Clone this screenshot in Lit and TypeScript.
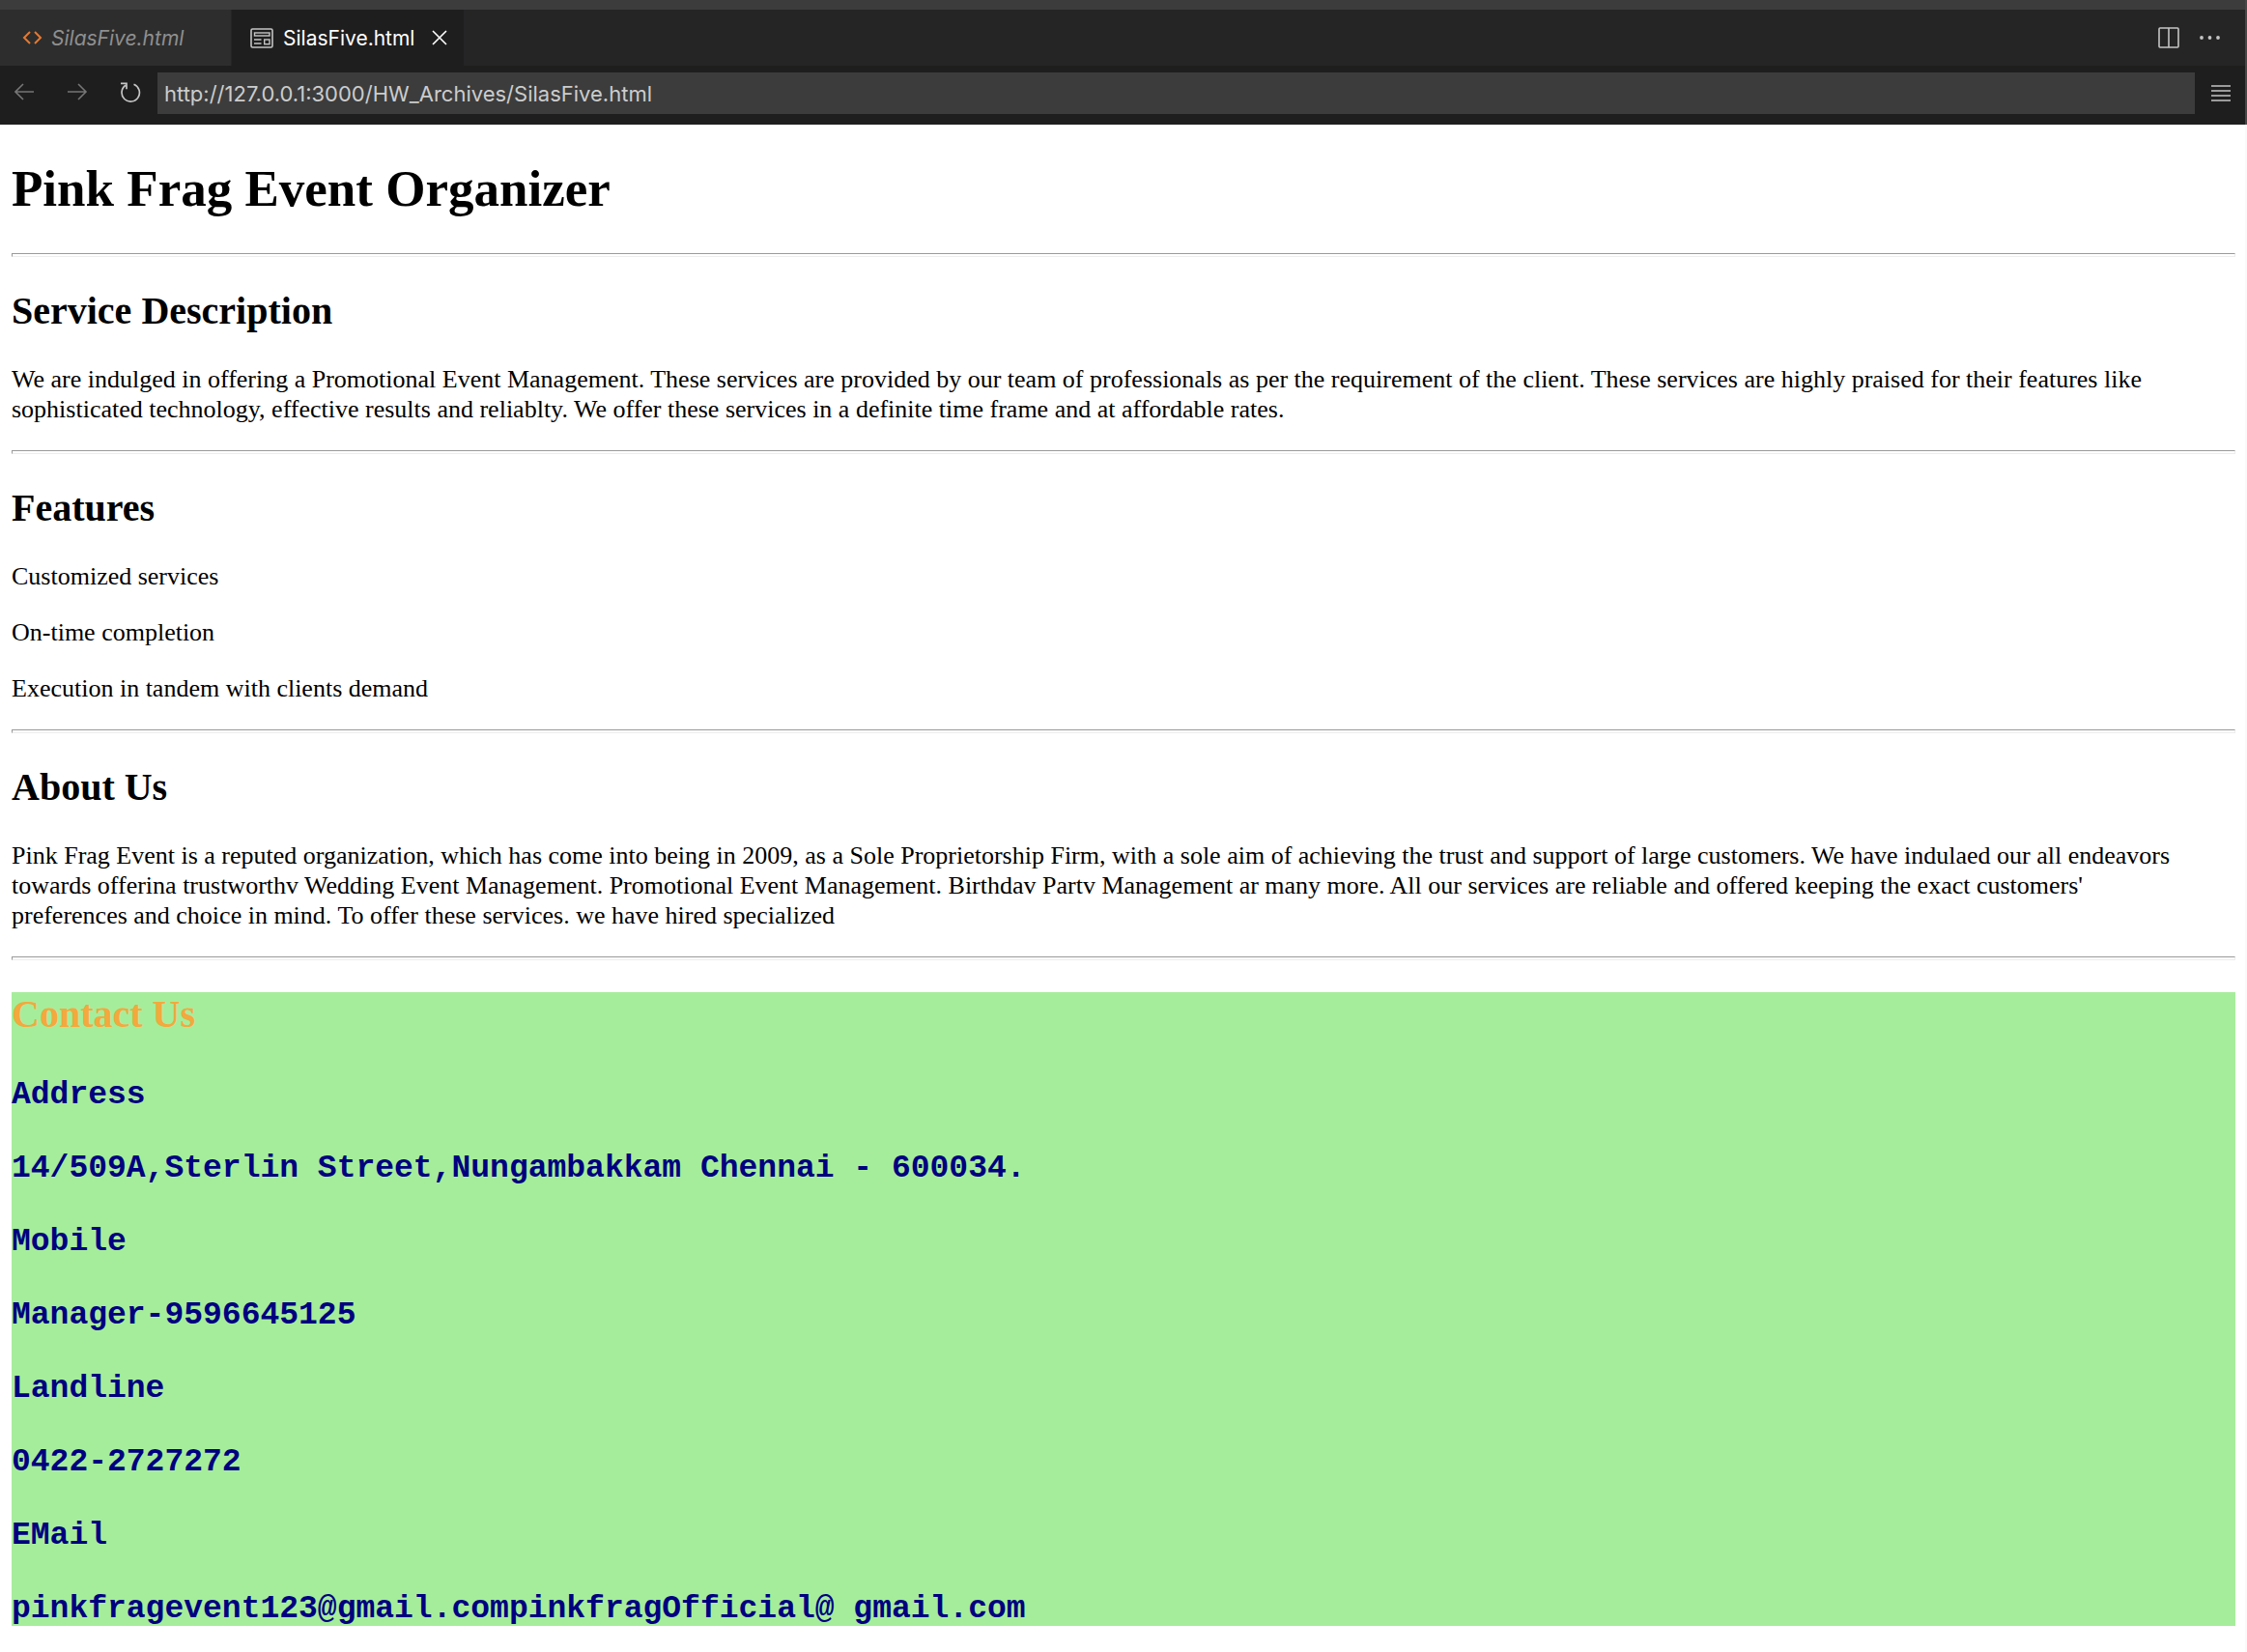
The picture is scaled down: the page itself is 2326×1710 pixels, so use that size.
import { LitElement, html, css, svg } from "lit";
import { customElement, property } from "lit/decorators.js";

const icons = {
  code: svg`<path d="M8 4 2 10l6 6M13 4l6 6-6 6" stroke-width="2" />`,
  preview: svg`<rect x="1" y="1" width="22" height="19" rx="1.5" stroke-width="1.6" /><rect x="4.5" y="5" width="15.5" height="3" stroke-width="1.4" /><path d="M4 12h7.500M4 16h7.500" stroke-width="1.4" /><rect x="14.700" y="12" width="5.300" height="4.700" stroke-width="1.4" />`,
  close: svg`<path d="M1 1l14 14M15 1 1 15" stroke-width="1.6" />`,
  back: svg`<path d="M20 9H1M9 1 1 9l8 8" stroke-width="1.6" />`,
  forward: svg`<path d="M0 9h19M11 1l8 8-8 8" stroke-width="1.6" />`,
  reload: svg`<path d="M13.500 2.300A9.200 9.200 0 1 1 5 3.300M0 1.300h6v6" stroke-width="1.7" />`,
  split: svg`<rect x="1" y="1" width="20" height="20" rx="1" stroke-width="1.6" /><path d="M11 1v20" stroke-width="1.6" />`,
  more: svg`<g fill="currentColor" stroke="none"><circle cx="2" cy="11" r="1.900" /><circle cx="10.500" cy="11" r="1.900" /><circle cx="19" cy="11" r="1.900" /></g>`,
  menu: svg`<path d="M0 1h20M0 6h20M0 11h20M0 16h20" stroke-width="1.6" />`,
};

const icon = (name: keyof typeof icons, width: number, height: number) => html`
  <svg width=${width} height=${height} viewBox="0 0 ${width} ${height}" fill="none" stroke="currentColor" aria-hidden="true">
    ${icons[name]}
  </svg>
`;

@customElement("editor-chrome")
export class EditorChrome extends LitElement {
  @property() url = "";

  static styles = css`
    :host {
      display: block;
      background: #1e1e1e;
      border-right: 2px solid #484848;
      font-family: Inter, "Liberation Sans", sans-serif;
      font-size: 21px;
      color: #c5c5c5;
    }
    svg {
      display: block;
      flex: none;
    }
    button {
      display: flex;
      align-items: center;
      margin: 0;
      padding: 0;
      border: 0;
      background: none;
      color: inherit;
      font: inherit;
      cursor: pointer;
    }
    .tabs {
      display: flex;
      height: 58px;
      border-top: 10px solid #3c3c3c;
      background: #252526;
    }
    .tab {
      display: flex;
      align-items: center;
      box-sizing: border-box;
      width: 240px;
      padding-left: 23px;
      background: #2d2d2d;
      border-right: 1px solid #252526;
      color: #8f8f8f;
      font-style: italic;
    }
    .tab .label {
      gap: 9px;
    }
    .tab.active {
      padding-left: 19px;
      gap: 18px;
      background: #1e1e1e;
      border-right: 0;
      color: #fff;
      font-style: normal;
    }
    .tab.active .label {
      gap: 10px;
    }
    .code {
      color: #e37933;
    }
    .preview {
      color: #c5c5c5;
    }
    .actions {
      display: flex;
      gap: 21px;
      margin-left: auto;
      padding-right: 26px;
    }
    .bar {
      display: flex;
      align-items: center;
      height: 61px;
      box-sizing: border-box;
      padding: 0 15px 4px;
    }
    .nav {
      display: flex;
      align-items: center;
      gap: 34px;
      margin-right: 17px;
      padding-bottom: 3px;
    }
    .nav button:disabled {
      color: #767676;
      cursor: default;
    }
    .address {
      flex: 1;
      min-width: 0;
      height: 43px;
      box-sizing: border-box;
      margin: 0 17px 0 0;
      padding: 0 7px;
      border: 0;
      background: #3c3c3c;
      color: #ccc;
      font: inherit;
      font-size: 22px;
    }
  `;

  render() {
    return html`
      <div class="tabs">
        <div class="tab">
          <button class="label"><span class="code">${icon("code", 21, 20)}</span>SilasFive.html</button>
        </div>
        <div class="tab active">
          <button class="label"><span class="preview">${icon("preview", 24, 21)}</span>SilasFive.html</button>
          <button aria-label="Close tab">${icon("close", 16, 16)}</button>
        </div>
        <div class="actions">
          <button aria-label="Split editor">${icon("split", 22, 22)}</button>
          <button aria-label="More actions">${icon("more", 21, 22)}</button>
        </div>
      </div>
      <div class="bar">
        <div class="nav">
          <button disabled aria-label="Back">${icon("back", 21, 18)}</button>
          <button disabled aria-label="Forward">${icon("forward", 21, 18)}</button>
          <button aria-label="Reload">${icon("reload", 21, 21)}</button>
        </div>
        <input class="address" type="text" aria-label="Address" .value=${this.url} />
        <button aria-label="Menu">${icon("menu", 20, 17)}</button>
      </div>
    `;
  }
}

@customElement("app-root")
export class AppRoot extends LitElement {
  static styles = css`
    :host {
      display: flex;
      flex-direction: column;
      min-height: 100vh;
      background: #fff;
      color: #000;
      font-family: "Liberation Serif", "Times New Roman", serif;
      font-size: 26px;
      line-height: 31px;
    }
    .page {
      display: flow-root;
      flex: 1;
      padding: 0 10px 0 12px;
      border-right: 2px solid #fafafa;
    }
    h1 {
      margin: 35px 0 36px;
      font-size: 53px;
      line-height: 62px;
    }
    h2 {
      margin: 33px 0 32px;
      font-size: 40px;
      line-height: 46px;
    }
    p {
      margin: 27px 0;
      padding-right: 48px;
    }
    h2 + p {
      margin-top: 0;
    }
    hr {
      height: 2px;
      margin: 0;
      border: 1px solid;
      border-color: #9a9a9a #ededed #ededed #9a9a9a;
    }
    .contact {
      display: flow-root;
      margin: 33px 0 27px;
      background: #a6ed9b;
      color: #000080;
    }
    .contact h2 {
      margin: 0 0 44px;
      color: #f4a83d;
    }
    h3 {
      margin: 42px 0 0;
      font-family: "Liberation Mono", "Courier New", monospace;
      font-size: 33px;
      line-height: 34px;
    }
    h2 + h3 {
      margin-top: 0;
    }
  `;

  private contact = [
    "Address",
    "14/509A,Sterlin Street,Nungambakkam Chennai - 600034.",
    "Mobile",
    "Manager-9596645125",
    "Landline",
    "0422-2727272",
    "EMail",
    "pinkfragevent123@gmail.compinkfragOfficial@ gmail.com",
  ];

  render() {
    return html`
      <editor-chrome url="http://127.0.0.1:3000/HW_Archives/SilasFive.html"></editor-chrome>
      <main class="page">
        <h1>Pink Frag Event Organizer</h1>
        <hr />
        <h2>Service Description</h2>
        <p>
          We are indulged in offering a Promotional Event Management. These services are provided by our team of
          professionals as per the requirement of the client. These services are highly praised for their features like
          sophisticated technology, effective results and reliablty. We offer these services in a definite time frame
          and at affordable rates.
        </p>
        <hr />
        <h2>Features</h2>
        <p>Customized services</p>
        <p>On-time completion</p>
        <p>Execution in tandem with clients demand</p>
        <hr />
        <h2>About Us</h2>
        <p>
          Pink Frag Event is a reputed organization, which has come into being in 2009, as a Sole Proprietorship Firm,
          with a sole aim of achieving the trust and support of large customers. We have indulaed our all endeavors
          towards offerina trustworthv Wedding Event Management. Promotional Event Management. Birthdav Partv
          Management ar many more. All our services are reliable and offered keeping the exact customers' preferences
          and choice in mind. To offer these services. we have hired specialized
        </p>
        <hr />
        <section class="contact">
          <h2>Contact Us</h2>
          ${this.contact.map((line) => html`<h3>${line}</h3>`)}
        </section>
      </main>
    `;
  }
}
